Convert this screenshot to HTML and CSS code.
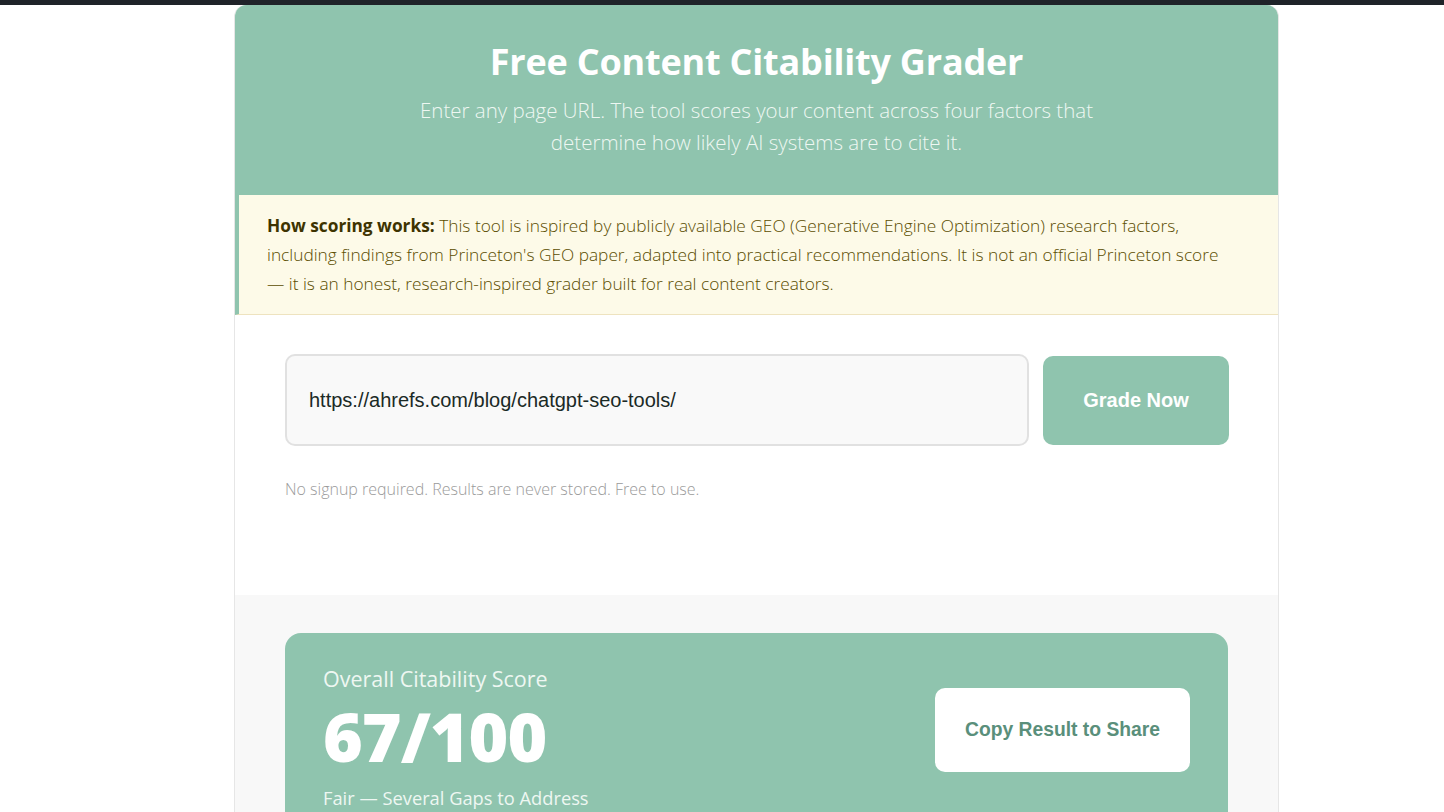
FILE: index.html
```html
<!DOCTYPE html>
<html lang="en">
<head>
  <meta charset="UTF-8">
  <meta name="viewport" content="width=device-width, initial-scale=1.0">
  <title>Free Content Citability Grader</title>
  <link rel="stylesheet" href="styles.css">
</head>
<body>
  <div class="topbar"></div>

  <div class="container">
    <div class="header">
      <h1>Free Content Citability Grader</h1>
      <p>Enter any page URL. The tool scores your content across four factors that determine how likely AI systems are to cite it.</p>
    </div>

    <div class="notice">
      <strong>How scoring works:</strong> This tool is inspired by publicly available GEO (Generative Engine Optimization) research factors, including findings from Princeton's GEO paper, adapted into practical recommendations. It is not an official Princeton score — it is an honest, research-inspired grader built for real content creators.
    </div>

    <div class="form-section">
      <div class="form-row">
        <input type="text" id="url" class="url-input" value="https://ahrefs.com/blog/chatgpt-seo-tools/">
        <button class="grade-btn">Grade Now</button>
      </div>
      <div class="form-note">No signup required. Results are never stored. Free to use.</div>
    </div>

    <div class="results">
      <div class="score-card">
        <div class="score-info">
          <div class="score-label">Overall Citability Score</div>
          <div class="score-value">67/100</div>
          <div class="score-verdict">Fair — Several Gaps to Address</div>
        </div>
        <button class="copy-btn">Copy Result to Share</button>
      </div>
    </div>
  </div>
</body>
</html>
```

FILE: styles.css
```css
body {
  margin: 0;
  background: #fff;
  font-family: "Open Sans", "Noto Sans", sans-serif;
  overflow: hidden;
}
.topbar {
  height: 5px;
  background: #1f2329;
}
.container {
  width: 1045px;
  margin-left: 234px;
  border: 1px solid #e6e6e6;
  border-top: none;
  border-radius: 12px 12px 0 0;
  overflow: hidden;
  box-sizing: border-box;
}
.header {
  background: #8fc4ae;
  color: #fff;
  text-align: center;
  padding: 34px 40px 37px;
}
.header h1 {
  margin: 0;
  font-size: 36px;
  font-weight: 700;
  line-height: 46px;
  letter-spacing: -0.2px;
}
.header p {
  max-width: 720px;
  margin: 9px auto 0;
  font-size: 20.5px;
  font-weight: 300;
  line-height: 32px;
  color: #eef7f2;
}
.notice {
  background: #fdfae8;
  border-left: 4px solid #8fc4ae;
  border-bottom: 1px solid #eee3bf;
  padding: 16px 44px 16px 28px;
  font-size: 17.3px;
  font-weight: 300;
  line-height: 29px;
  color: #5b4d00;
}
.notice strong {
  font-weight: 700;
  color: #3d3300;
}
.form-section {
  background: #fff;
  padding: 39px 50px 95px 50px;
}
.form-row {
  display: flex;
  align-items: center;
  gap: 14px;
}
.url-input {
  flex: 1;
  height: 92px;
  box-sizing: border-box;
  border: 2px solid #e1e1e1;
  border-radius: 10px;
  background: #f9f9f9;
  padding: 0 22px;
  font-family: "Liberation Sans", Arial, sans-serif;
  font-size: 20px;
  color: #1b2a26;
  outline: none;
}
.grade-btn {
  width: 186px;
  height: 89px;
  margin-right: -1px;
  border: none;
  border-radius: 10px;
  background: #8fc4ae;
  color: #fff;
  font-family: "Liberation Sans", Arial, sans-serif;
  font-size: 20px;
  font-weight: 700;
  cursor: pointer;
}
.form-note {
  margin-top: 32px;
  font-size: 16px;
  font-weight: 300;
  color: #9a9a9a;
}
.results {
  background: #f8f8f8;
  padding: 38px 50px 40px;
}
.score-card {
  background: #8fc4ae;
  border-radius: 16px;
  padding: 30px 38px 40px;
  display: flex;
  align-items: center;
  justify-content: space-between;
  color: #fff;
}
.score-label {
  font-size: 21.5px;
  line-height: 32px;
  color: #eef7f2;
}
.score-value {
  font-size: 68px;
  font-weight: 800;
  line-height: 82px;
  letter-spacing: -1px;
}
.score-verdict {
  margin-top: 8px;
  font-size: 18.3px;
  color: #eef7f2;
}
.copy-btn {
  width: 255px;
  height: 84px;
  margin-top: -13px;
  border: none;
  border-radius: 10px;
  background: #fff;
  color: #5a8f7b;
  font-family: "Liberation Sans", Arial, sans-serif;
  font-size: 19.3px;
  font-weight: 700;
  cursor: pointer;
}
```
